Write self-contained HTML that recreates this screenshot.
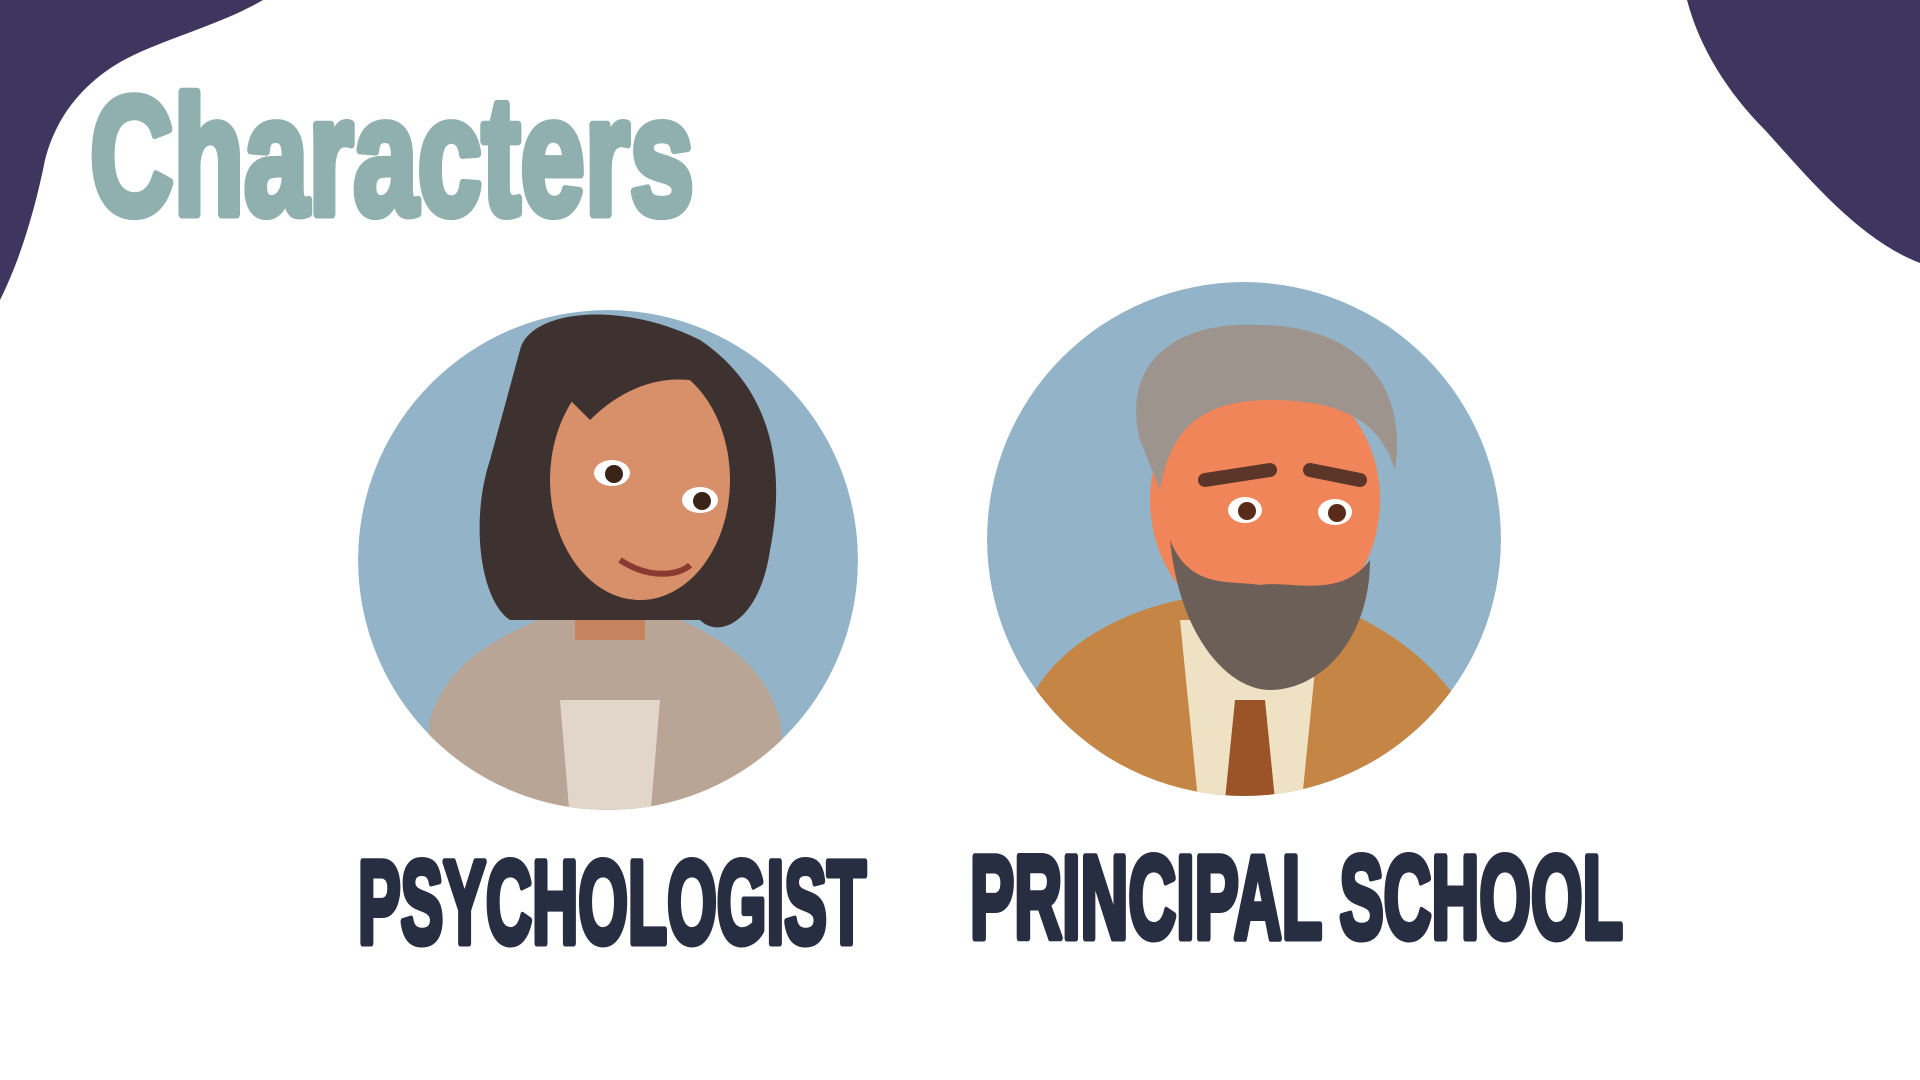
<!DOCTYPE html>
<html><head><meta charset="utf-8"><style>
html,body{margin:0;padding:0;background:#fff;width:1920px;height:1080px;overflow:hidden}
</style></head><body>
<svg width="1920" height="1080" viewBox="0 0 1920 1080" xmlns="http://www.w3.org/2000/svg">
<defs>
<clipPath id="c1"><circle cx="608" cy="560" r="250"/></clipPath>
<clipPath id="c2"><circle cx="1244" cy="539" r="257"/></clipPath>
</defs>
<path d="M0 0 L263 0 C220 25 160 40 122 61 C80 85 55 120 45 160 C35 210 20 260 0 300 Z" fill="#3f3660"/>
<path d="M1687 0 C1700 50 1730 95 1765 130 C1810 180 1860 240 1920 263 L1920 0 Z" fill="#3f3660"/>
<text x="90" y="214" font-family="Liberation Sans Narrow, Liberation Sans, sans-serif" font-weight="bold" font-size="168" fill="#8fb0ae" stroke="#8fb0ae" stroke-width="9" stroke-linejoin="round" textLength="604" lengthAdjust="spacingAndGlyphs">Characters</text>

<g clip-path="url(#c1)">
<circle cx="608" cy="560" r="250" fill="#93b4c8"/>
<path d="M430 720 C450 650 520 630 560 610 L660 610 C700 630 760 650 780 720 L790 820 L420 820 Z" fill="#b8a595"/>
<path d="M560 700 L660 700 L650 820 L570 820 Z" fill="#e2d6ca"/>
<rect x="575" y="560" width="70" height="80" fill="#c5845e"/>
<path d="M520 350 C530 310 620 300 700 340 C760 380 790 450 770 550 C760 620 720 640 700 620 L510 620 C480 600 470 520 490 460 Z" fill="#3d3230"/>
<ellipse cx="640" cy="480" rx="90" ry="120" fill="#d8906a"/>
<path d="M550 380 C600 330 690 340 740 400 C700 370 640 370 590 420 Z" fill="#3d3230"/>
<ellipse cx="612" cy="473" rx="18" ry="13" fill="#fff"/><circle cx="614" cy="474" r="9" fill="#3a2418"/>
<ellipse cx="700" cy="500" rx="18" ry="13" fill="#fff"/><circle cx="702" cy="501" r="9" fill="#3a2418"/>
<path d="M620 560 C650 580 680 575 690 565" stroke="#8a3a30" stroke-width="6" fill="none"/>
</g>

<g clip-path="url(#c2)">
<circle cx="1244" cy="539" r="257" fill="#93b4c8"/>
<path d="M1030 700 C1060 640 1130 610 1180 600 L1320 600 C1370 620 1430 650 1470 720 L1480 820 L1010 820 Z" fill="#c58645"/>
<path d="M1180 620 L1320 620 L1300 820 L1200 820 Z" fill="#efe2c4"/>
<path d="M1235 700 L1265 700 L1275 800 L1225 800 Z" fill="#9a5428"/>
<ellipse cx="1265" cy="500" rx="115" ry="130" fill="#f0855a"/>
<path d="M1170 540 C1180 640 1230 690 1270 690 C1320 690 1370 640 1370 560 C1340 600 1290 580 1260 585 C1230 580 1190 590 1170 540 Z" fill="#6b5f58"/>
<path d="M1140 440 C1120 360 1180 320 1260 325 C1340 325 1410 370 1395 470 C1380 420 1340 400 1270 400 C1200 400 1170 430 1160 490 Z" fill="#9c948d"/>
<ellipse cx="1245" cy="510" rx="17" ry="13" fill="#fff"/><circle cx="1247" cy="511" r="9" fill="#5a2b18"/>
<ellipse cx="1335" cy="512" rx="17" ry="13" fill="#fff"/><circle cx="1337" cy="513" r="9" fill="#5a2b18"/>
<path d="M1205 480 L1270 470 M1310 470 L1360 480" stroke="#5a3528" stroke-width="14" stroke-linecap="round"/>
</g>

<text x="358" y="943" font-family="Liberation Sans Narrow, Liberation Sans, sans-serif" font-weight="bold" font-size="118" fill="#272e42" stroke="#272e42" stroke-width="7" stroke-linejoin="round" textLength="508" lengthAdjust="spacingAndGlyphs">PSYCHOLOGIST</text>
<text x="970" y="938" font-family="Liberation Sans Narrow, Liberation Sans, sans-serif" font-weight="bold" font-size="118" fill="#272e42" stroke="#272e42" stroke-width="7" stroke-linejoin="round" textLength="653" lengthAdjust="spacingAndGlyphs">PRINCIPAL SCHOOL</text>
</svg>
</body></html>
